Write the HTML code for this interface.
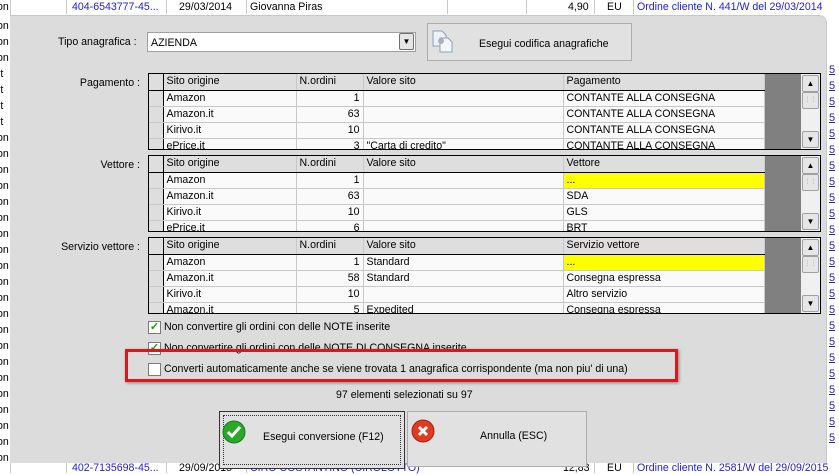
<!DOCTYPE html><html><head><meta charset="utf-8"><style>
*{margin:0;padding:0;box-sizing:border-box}
body{width:839px;height:473px;overflow:hidden;background:#fff;font-family:"Liberation Sans",sans-serif;font-size:10.6px;color:#000;position:relative}
.a{position:absolute;white-space:nowrap;line-height:14px}
.bl{color:#2020e0}
.vl{position:absolute;width:1px;background:#c8c8c8}
.dlg{position:absolute;left:10px;top:15px;width:817px;height:448px;background:#dcdcdc;border-radius:0 8px 0 0;border-top:1px solid #c8c8c8;border-right:1px solid #c8c8c8}
.grid{position:absolute;left:148px;width:673px;height:77px;border:1px solid #000;background:#808080;overflow:hidden}
.grid table{position:absolute;left:0;top:0;border-collapse:collapse;table-layout:fixed;width:615px}
.grid td{height:16px;border-right:1px solid #c8c8c8;border-bottom:1px solid #c8c8c8;padding:0 3px;line-height:15px;background:#fafafa;overflow:hidden;white-space:nowrap}
.grid tr.h td{background:#dedede;border-bottom:1px solid #000}
.grid td.rh{background:#dedede;border-right:1px solid #000;padding:0}
.grid td.n{text-align:right}
.grid td.y{background:#ffff00}
.sb{position:absolute;right:0;top:0;width:19px;height:75px;background:#f0f0f0}
.sb .bt{position:absolute;left:1px;width:17px;height:17px;background:#e6e6e6;border:1px solid #a0a0a0;border-radius:2px;font-size:8px;text-align:center;line-height:15px}
.lab{position:absolute;right:699px;white-space:nowrap}
.chk{position:absolute;width:13px;height:13px;border:1px solid #7a7a7a;background:#fff;font-size:11px;line-height:11px;text-align:center;color:#1a9a1a;font-weight:bold}
.btn{position:absolute;background:#e1e1e1;border:1px solid #adadad}
</style></head><body>
<div class="vl" style="left:66px;top:0;height:14px"></div>
<div class="a bl" style="left:72px;top:0">404-6543777-45...</div>
<div class="vl" style="left:166px;top:0;height:14px"></div>
<div class="a" style="left:179px;top:0">29/03/2014</div>
<div class="vl" style="left:246px;top:0;height:14px"></div>
<div class="a" style="left:250px;top:0">Giovanna Piras</div>
<div class="vl" style="left:447px;top:0;height:14px"></div>
<div class="vl" style="left:526px;top:0;height:14px"></div>
<div class="a" style="left:568px;top:0">4,90</div>
<div class="vl" style="left:594px;top:0;height:14px"></div>
<div class="a" style="left:607px;top:0">EU</div>
<div class="vl" style="left:633px;top:0;height:14px"></div>
<div class="a bl" style="left:637px;top:0">Ordine cliente N. 441/W del 29/03/2014</div>
<div class="vl" style="left:10px;top:0;height:473px"></div>
<div class="a" style="left:-3px;top:0">on</div>
<div class="a" style="left:-3px;top:19px">on</div>
<div class="a" style="left:-3px;top:35px">on</div>
<div class="a" style="left:-3px;top:51px">on</div>
<div class="a" style="left:-2px;top:67px">it</div>
<div class="a" style="left:-2px;top:83px">it</div>
<div class="a" style="left:-2px;top:99px">it</div>
<div class="a" style="left:-2px;top:115px">it</div>
<div class="a" style="left:-3px;top:131px">on</div>
<div class="a" style="left:-3px;top:147px">on</div>
<div class="a" style="left:-3px;top:163px">on</div>
<div class="a" style="left:-3px;top:179px">on</div>
<div class="a" style="left:-3px;top:195px">on</div>
<div class="a" style="left:-3px;top:211px">on</div>
<div class="a" style="left:-3px;top:227px">on</div>
<div class="a" style="left:-3px;top:243px">on</div>
<div class="a" style="left:-3px;top:259px">on</div>
<div class="a" style="left:-3px;top:275px">on</div>
<div class="a" style="left:-3px;top:291px">on</div>
<div class="a" style="left:-3px;top:307px">on</div>
<div class="a" style="left:-3px;top:323px">on</div>
<div class="a" style="left:-3px;top:339px">on</div>
<div class="a" style="left:-3px;top:355px">on</div>
<div class="a" style="left:-3px;top:371px">on</div>
<div class="a" style="left:-3px;top:387px">on</div>
<div class="a" style="left:-3px;top:403px">on</div>
<div class="a" style="left:-3px;top:419px">on</div>
<div class="a" style="left:-3px;top:435px">on</div>
<div class="a" style="left:-3px;top:451px">on</div>
<div class="a bl" style="left:829px;top:62px;line-height:16px;text-decoration:underline;white-space:normal;width:10px;font-size:11px">5 5 5 5 5 5 5 5 5 5 5 5 5 5 5 5 5 5 5 5 5 5 5 5</div>
<div class="a bl" style="left:72px;top:461px">402-7135698-45...</div>
<div class="vl" style="left:66px;top:461px;height:12px"></div>
<div class="vl" style="left:166px;top:461px;height:12px"></div>
<div class="a" style="left:179px;top:461px">29/09/2015</div>
<div class="vl" style="left:246px;top:461px;height:12px"></div>
<div class="a bl" style="left:250px;top:461px">CIRO COSTANTINO (CIROLOTTO)</div>
<div class="a" style="left:563px;top:461px">12,83</div>
<div class="vl" style="left:594px;top:461px;height:12px"></div>
<div class="a" style="left:607px;top:461px">EU</div>
<div class="vl" style="left:633px;top:461px;height:12px"></div>
<div class="a bl" style="left:637px;top:461px">Ordine cliente N. 2581/W del 29/09/2015</div>

<div class="dlg"></div>
<div class="a" style="left:58px;top:35px">Tipo anagrafica :</div>
<div class="a" style="left:147px;top:32px;width:269px;height:20px;background:#fff;border:1px solid #a0a0a0"></div>
<div class="a" style="left:151px;top:36px">AZIENDA</div>
<div class="a" style="left:399px;top:33px;width:15px;height:17px;background:#e6e6e6;border:1px solid #707070;border-radius:2px;font-size:8px;text-align:center;line-height:15px">▼</div>
<div class="btn" style="left:427px;top:23px;width:205px;height:38px"></div>
<svg class="a" style="left:431px;top:29px" width="24" height="24" viewBox="0 0 24 24"><path d="M2 2h9l4 4v11H2z" fill="#eef2f8" stroke="#8fa0b8"/><path d="M9 9h8l4 4v10H9z" fill="#f4f6fa" stroke="#8fa0b8"/><circle cx="10" cy="12" r="3" fill="#a8b0c0"/></svg>
<div class="a" style="left:479px;top:37px">Esegui codifica anagrafiche</div>

<div class="lab" style="top:77px">Pagamento :</div>
<div class="grid" style="top:73px"><table>
<col style="width:14px"><col style="width:133px"><col style="width:67px"><col style="width:200px"><col style="width:201px">
<tr class="h"><td class="rh"></td><td>Sito origine</td><td>N.ordini</td><td>Valore sito</td><td>Pagamento</td></tr>
<tr><td class="rh"></td><td>Amazon</td><td class="n">1</td><td></td><td>CONTANTE ALLA CONSEGNA</td></tr>
<tr><td class="rh"></td><td>Amazon.it</td><td class="n">63</td><td></td><td>CONTANTE ALLA CONSEGNA</td></tr>
<tr><td class="rh"></td><td>Kirivo.it</td><td class="n">10</td><td></td><td>CONTANTE ALLA CONSEGNA</td></tr>
<tr><td class="rh"></td><td>ePrice.it</td><td class="n">3</td><td>"Carta di credito"</td><td>CONTANTE ALLA CONSEGNA</td></tr>
</table><div class="sb"><div class="bt" style="top:1px">▲</div><div class="bt" style="top:18px;font-size:6px;color:#aaa">⋮⋮</div><div class="bt" style="top:57px">▼</div></div></div>

<div class="lab" style="top:159px">Vettore :</div>
<div class="grid" style="top:155px"><table>
<col style="width:14px"><col style="width:133px"><col style="width:67px"><col style="width:200px"><col style="width:201px">
<tr class="h"><td class="rh"></td><td>Sito origine</td><td>N.ordini</td><td>Valore sito</td><td>Vettore</td></tr>
<tr><td class="rh"></td><td>Amazon</td><td class="n">1</td><td></td><td class="y">...</td></tr>
<tr><td class="rh"></td><td>Amazon.it</td><td class="n">63</td><td></td><td>SDA</td></tr>
<tr><td class="rh"></td><td>Kirivo.it</td><td class="n">10</td><td></td><td>GLS</td></tr>
<tr><td class="rh"></td><td>ePrice.it</td><td class="n">6</td><td></td><td>BRT</td></tr>
</table><div class="sb"><div class="bt" style="top:1px">▲</div><div class="bt" style="top:18px;font-size:6px;color:#aaa">⋮⋮</div><div class="bt" style="top:57px">▼</div></div></div>

<div class="lab" style="top:241px">Servizio vettore :</div>
<div class="grid" style="top:237px"><table>
<col style="width:14px"><col style="width:133px"><col style="width:67px"><col style="width:200px"><col style="width:201px">
<tr class="h"><td class="rh"></td><td>Sito origine</td><td>N.ordini</td><td>Valore sito</td><td>Servizio vettore</td></tr>
<tr><td class="rh"></td><td>Amazon</td><td class="n">1</td><td>Standard</td><td class="y">...</td></tr>
<tr><td class="rh"></td><td>Amazon.it</td><td class="n">58</td><td>Standard</td><td>Consegna espressa</td></tr>
<tr><td class="rh"></td><td>Kirivo.it</td><td class="n">10</td><td></td><td>Altro servizio</td></tr>
<tr><td class="rh"></td><td>Amazon.it</td><td class="n">5</td><td>Expedited</td><td>Consegna espressa</td></tr>
</table><div class="sb"><div class="bt" style="top:1px">▲</div><div class="bt" style="top:18px;font-size:6px;color:#aaa">⋮⋮</div><div class="bt" style="top:57px">▼</div></div></div>

<div class="chk" style="left:148px;top:321px">✓</div>
<div class="a" style="left:164px;top:320px">Non convertire gli ordini con delle NOTE inserite</div>
<div class="chk" style="left:148px;top:342px">✓</div>
<div class="a" style="left:164px;top:341px">Non convertire gli ordini con delle NOTE DI CONSEGNA inserite</div>
<div class="a" style="left:125px;top:349px;width:553px;height:33px;border:3px solid #e0141c;box-shadow:1px 1px 3px rgba(0,0,0,.4)"></div>
<div class="chk" style="left:148px;top:363px"></div>
<div class="a" style="left:164px;top:362px">Converti automaticamente anche se viene trovata 1 anagrafica corrispondente (ma non piu' di una)</div>
<div class="a" style="left:336px;top:388px">97 elementi selezionati su 97</div>

<div class="btn" style="left:219px;top:411px;width:186px;height:58px;border:1px solid #333"><div style="position:absolute;left:3px;top:3px;right:3px;bottom:3px;border:1px dotted #333"></div></div>
<svg class="a" style="left:222px;top:420px" width="24" height="24" viewBox="0 0 24 24"><circle cx="12" cy="12" r="11" fill="#2aa82a" stroke="#1a7a1a"/><path d="M6 12l4 4 8-9" fill="none" stroke="#fff" stroke-width="3"/></svg>
<div class="a" style="left:263px;top:430px">Esegui conversione (F12)</div>
<div class="btn" style="left:407px;top:411px;width:180px;height:56px"></div>
<svg class="a" style="left:411px;top:419px" width="24" height="24" viewBox="0 0 24 24"><circle cx="12" cy="12" r="11" fill="#e03a20" stroke="#a82010"/><path d="M8 8l8 8M16 8l-8 8" stroke="#fff" stroke-width="3"/></svg>
<div class="a" style="left:480px;top:429px">Annulla (ESC)</div>
</body></html>
